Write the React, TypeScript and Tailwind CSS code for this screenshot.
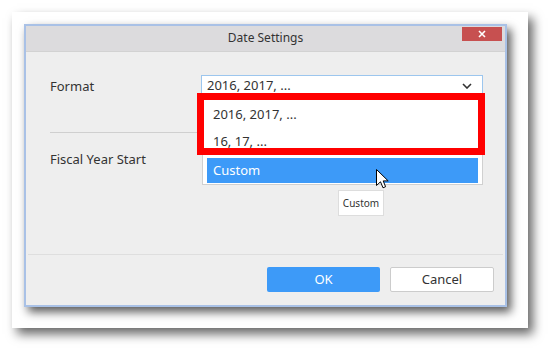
const font = "font-['Noto_Sans',sans-serif]";

function Cursor() {
  return (
    <svg width="13" height="20" viewBox="0 0 13 20" className="absolute left-[376px] top-[169px]">
      <path
        d="M0.5 0.5 L0.5 16.5 L4.5 12.8 L7 18.8 L9.6 17.7 L7.2 11.9 L12.2 11.9 Z"
        fill="#fff"
        stroke="#000"
        strokeWidth="1"
        strokeLinejoin="miter"
      />
    </svg>
  );
}

function Chevron() {
  return (
    <svg width="10" height="6" viewBox="0 0 10 6">
      <path d="M1 1 L5 5 L9 1" fill="none" stroke="#333" strokeWidth="1.6" />
    </svg>
  );
}

export default function App() {
  return (
    <div className={`relative w-[548px] h-[348px] bg-white overflow-hidden ${font}`}>
      <div className="pl-[12px] pt-[12px]">
        <div className="w-[516px] h-[316px] bg-white pl-[12px] pt-[12px] shadow-[5px_6px_10px_rgba(0,0,0,0.6)]">
          <div className="w-[483px] h-[283px] flex flex-col border-2 border-[#a9c1e6] bg-[#eeeeee] shadow-[4px_5px_9px_rgba(0,0,0,0.65)]">
            {/* title bar */}
            <div className="grid grid-cols-[1fr_auto_1fr] h-[26px] bg-[#dcdbdd] border-b border-[#d2d2d2]">
              <div />
              <div className="self-center text-[12px] text-[#333] leading-none pb-[2px]">Date Settings</div>
              <div className="flex justify-end items-start pt-[1px] pr-[3px]">
                <button className="w-[40px] h-[14px] bg-[#c75050] flex items-center justify-center">
                  <svg width="8" height="8" viewBox="0 0 8 8">
                    <path d="M1 1 L7 7 M7 1 L1 7" stroke="#fff" strokeWidth="1.6" />
                  </svg>
                </button>
              </div>
            </div>

            {/* body */}
            <div className="flex-1 pl-[24px] pr-[22px] pt-[23px] text-[13px] text-[#333]">
              <div className="flex items-center h-[22px]">
                <div className="w-[151px] pt-[2px]">Format</div>
                <div className="flex-1 h-[22px] bg-white border border-[#9cc6ee] flex items-center justify-between pl-[5px] pr-[10px]">
                  <span>2016, 2017, ...</span>
                  <Chevron />
                </div>
              </div>
              <div className="h-px bg-[#cfcfcf] mt-[35px]" />
              <div className="flex items-center h-[22px] mt-[16px]">
                <div className="w-[151px]">Fiscal Year Start</div>
              </div>
            </div>

            {/* footer */}
            <div className="mx-[2px] border-t border-[#dedede] h-[51px] flex items-start justify-end gap-[10px] pt-[12px] pr-[9px]">
              <button className="w-[113px] h-[25px] rounded-[2px] bg-[#3d9af8] text-white text-[13px]">OK</button>
              <button className="w-[104px] h-[25px] rounded-[2px] bg-white border border-[#cccccc] text-[#333] text-[13px]">
                Cancel
              </button>
            </div>
          </div>
        </div>
      </div>

      {/* open dropdown list */}
      <div className="absolute left-[202px] top-[96px] w-[281px] h-[89px] bg-white border border-[#d0d0d0] text-[13px] text-[#333]">
        <div className="h-[27px] flex items-center pl-[10px] mt-[4px]">2016, 2017, ...</div>
        <div className="h-[27px] flex items-center pl-[10px]">16, 17, ...</div>
        <div className="mx-[4px] mt-[3px] h-[25px] flex items-center pl-[6px] bg-[#3d9af8] text-white">Custom</div>
      </div>

      {/* highlight box */}
      <div className="absolute left-[197px] top-[93px] w-[288px] h-[62px] border-[7px] border-[#ff0000]" />

      {/* tooltip */}
      <div className="absolute left-[338px] top-[190px] w-[46px] h-[26px] bg-white border border-[#dddddd] flex items-center justify-center text-[10px] text-[#333]">
        Custom
      </div>

      <Cursor />
    </div>
  );
}
